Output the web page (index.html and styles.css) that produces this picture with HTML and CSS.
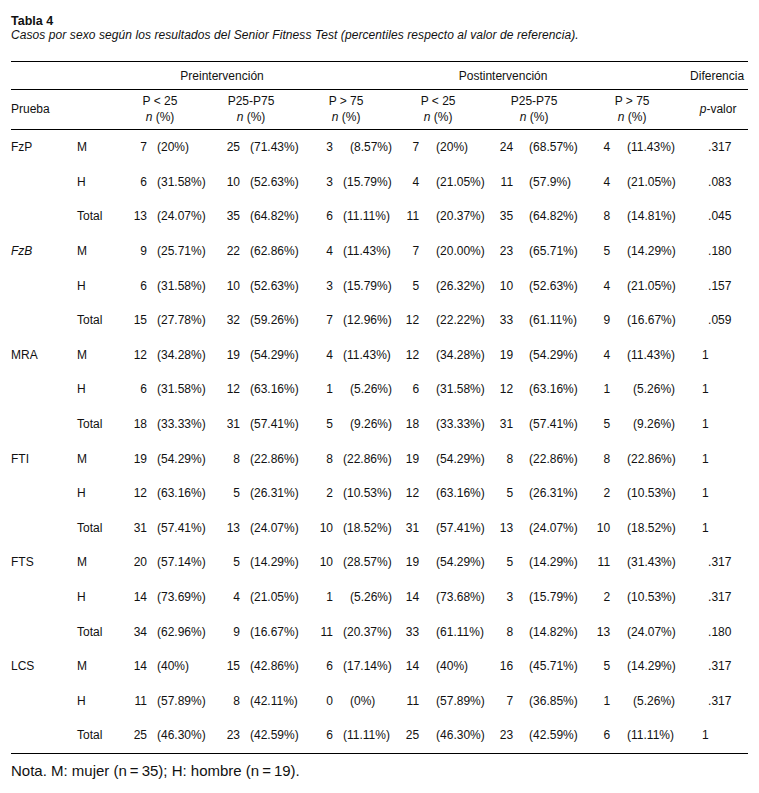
FILE: index.html
```html
<!DOCTYPE html>
<html lang="es">
<head>
<meta charset="utf-8">
<title>Tabla 4</title>
<link rel="stylesheet" href="styles.css">
</head>
<body>
<div class="page">
  <div class="caption">
    <div class="title">Tabla 4</div>
    <div class="subtitle">Casos por sexo según los resultados del Senior Fitness Test (percentiles respecto al valor de referencia).</div>
  </div>
  <table class="data">
    <colgroup>
      <col class="w-test"><col class="w-sex">
      <col class="w-n1"><col class="w-p1">
      <col class="w-n2"><col class="w-p2">
      <col class="w-n3"><col class="w-p3">
      <col class="w-n4"><col class="w-p4">
      <col class="w-n5"><col class="w-p5">
      <col class="w-n6"><col class="w-p6">
      <col class="w-pv">
    </colgroup>
    <thead>
      <tr class="h1">
        <th colspan="2"></th>
        <th colspan="6" class="g-pre">Preintervención</th>
        <th colspan="6" class="g-post">Postintervención</th>
        <th class="g-dif">Diferencia</th>
      </tr>
      <tr class="h2">
        <th colspan="2" class="h-test">Prueba</th>
        <th colspan="2" class="s1">P &lt; 25<br><i>n</i> (%)</th>
        <th colspan="2" class="s2">P25-P75<br><i>n</i> (%)</th>
        <th colspan="2" class="s3">P &gt; 75<br><i>n</i> (%)</th>
        <th colspan="2" class="s4">P &lt; 25<br><i>n</i> (%)</th>
        <th colspan="2" class="s5">P25-P75<br><i>n</i> (%)</th>
        <th colspan="2" class="s6">P &gt; 75<br><i>n</i> (%)</th>
        <th class="s7"><i>p</i>-valor</th>
      </tr>
    </thead>
    <tbody>
      <tr><td class="t">FzP</td><td>M</td><td class="n">7</td><td class="p a">(20%)</td><td class="n">25</td><td class="p a">(71.43%)</td><td class="n">3</td><td class="p b d1">(8.57%)</td><td class="n">7</td><td class="p c">(20%)</td><td class="n">24</td><td class="p e">(68.57%)</td><td class="n">4</td><td class="p f">(11.43%)</td><td class="pv dec">.317</td></tr>
      <tr><td></td><td>H</td><td class="n">6</td><td class="p a">(31.58%)</td><td class="n">10</td><td class="p a">(52.63%)</td><td class="n">3</td><td class="p b">(15.79%)</td><td class="n">4</td><td class="p c">(21.05%)</td><td class="n">11</td><td class="p e">(57.9%)</td><td class="n">4</td><td class="p f">(21.05%)</td><td class="pv dec">.083</td></tr>
      <tr><td></td><td>Total</td><td class="n">13</td><td class="p a">(24.07%)</td><td class="n">35</td><td class="p a">(64.82%)</td><td class="n">6</td><td class="p b">(11.11%)</td><td class="n">11</td><td class="p c">(20.37%)</td><td class="n">35</td><td class="p e">(64.82%)</td><td class="n">8</td><td class="p f">(14.81%)</td><td class="pv dec">.045</td></tr>

      <tr><td class="t"><i>FzB</i></td><td>M</td><td class="n">9</td><td class="p a">(25.71%)</td><td class="n">22</td><td class="p a">(62.86%)</td><td class="n">4</td><td class="p b">(11.43%)</td><td class="n">7</td><td class="p c">(20.00%)</td><td class="n">23</td><td class="p e">(65.71%)</td><td class="n">5</td><td class="p f">(14.29%)</td><td class="pv dec">.180</td></tr>
      <tr><td></td><td>H</td><td class="n">6</td><td class="p a">(31.58%)</td><td class="n">10</td><td class="p a">(52.63%)</td><td class="n">3</td><td class="p b">(15.79%)</td><td class="n">5</td><td class="p c">(26.32%)</td><td class="n">10</td><td class="p e">(52.63%)</td><td class="n">4</td><td class="p f">(21.05%)</td><td class="pv dec">.157</td></tr>
      <tr><td></td><td>Total</td><td class="n">15</td><td class="p a">(27.78%)</td><td class="n">32</td><td class="p a">(59.26%)</td><td class="n">7</td><td class="p b">(12.96%)</td><td class="n">12</td><td class="p c">(22.22%)</td><td class="n">33</td><td class="p e">(61.11%)</td><td class="n">9</td><td class="p f">(16.67%)</td><td class="pv dec">.059</td></tr>

      <tr><td class="t">MRA</td><td>M</td><td class="n">12</td><td class="p a">(34.28%)</td><td class="n">19</td><td class="p a">(54.29%)</td><td class="n">4</td><td class="p b">(11.43%)</td><td class="n">12</td><td class="p c">(34.28%)</td><td class="n">19</td><td class="p e">(54.29%)</td><td class="n">4</td><td class="p f">(11.43%)</td><td class="pv one">1</td></tr>
      <tr><td></td><td>H</td><td class="n">6</td><td class="p a">(31.58%)</td><td class="n">12</td><td class="p a">(63.16%)</td><td class="n">1</td><td class="p b d1">(5.26%)</td><td class="n">6</td><td class="p c">(31.58%)</td><td class="n">12</td><td class="p e">(63.16%)</td><td class="n">1</td><td class="p f d1">(5.26%)</td><td class="pv one">1</td></tr>
      <tr><td></td><td>Total</td><td class="n">18</td><td class="p a">(33.33%)</td><td class="n">31</td><td class="p a">(57.41%)</td><td class="n">5</td><td class="p b d1">(9.26%)</td><td class="n">18</td><td class="p c">(33.33%)</td><td class="n">31</td><td class="p e">(57.41%)</td><td class="n">5</td><td class="p f d1">(9.26%)</td><td class="pv one">1</td></tr>

      <tr><td class="t">FTI</td><td>M</td><td class="n">19</td><td class="p a">(54.29%)</td><td class="n">8</td><td class="p a">(22.86%)</td><td class="n">8</td><td class="p b">(22.86%)</td><td class="n">19</td><td class="p c">(54.29%)</td><td class="n">8</td><td class="p e">(22.86%)</td><td class="n">8</td><td class="p f">(22.86%)</td><td class="pv one">1</td></tr>
      <tr><td></td><td>H</td><td class="n">12</td><td class="p a">(63.16%)</td><td class="n">5</td><td class="p a">(26.31%)</td><td class="n">2</td><td class="p b">(10.53%)</td><td class="n">12</td><td class="p c">(63.16%)</td><td class="n">5</td><td class="p e">(26.31%)</td><td class="n">2</td><td class="p f">(10.53%)</td><td class="pv one">1</td></tr>
      <tr><td></td><td>Total</td><td class="n">31</td><td class="p a">(57.41%)</td><td class="n">13</td><td class="p a">(24.07%)</td><td class="n">10</td><td class="p b">(18.52%)</td><td class="n">31</td><td class="p c">(57.41%)</td><td class="n">13</td><td class="p e">(24.07%)</td><td class="n">10</td><td class="p f">(18.52%)</td><td class="pv one">1</td></tr>

      <tr><td class="t">FTS</td><td>M</td><td class="n">20</td><td class="p a">(57.14%)</td><td class="n">5</td><td class="p a">(14.29%)</td><td class="n">10</td><td class="p b">(28.57%)</td><td class="n">19</td><td class="p c">(54.29%)</td><td class="n">5</td><td class="p e">(14.29%)</td><td class="n">11</td><td class="p f">(31.43%)</td><td class="pv dec">.317</td></tr>
      <tr><td></td><td>H</td><td class="n">14</td><td class="p a">(73.69%)</td><td class="n">4</td><td class="p a">(21.05%)</td><td class="n">1</td><td class="p b d1">(5.26%)</td><td class="n">14</td><td class="p c">(73.68%)</td><td class="n">3</td><td class="p e">(15.79%)</td><td class="n">2</td><td class="p f">(10.53%)</td><td class="pv dec">.317</td></tr>
      <tr><td></td><td>Total</td><td class="n">34</td><td class="p a">(62.96%)</td><td class="n">9</td><td class="p a">(16.67%)</td><td class="n">11</td><td class="p b">(20.37%)</td><td class="n">33</td><td class="p c">(61.11%)</td><td class="n">8</td><td class="p e">(14.82%)</td><td class="n">13</td><td class="p f">(24.07%)</td><td class="pv dec">.180</td></tr>

      <tr><td class="t">LCS</td><td>M</td><td class="n">14</td><td class="p a">(40%)</td><td class="n">15</td><td class="p a">(42.86%)</td><td class="n">6</td><td class="p b">(17.14%)</td><td class="n">14</td><td class="p c">(40%)</td><td class="n">16</td><td class="p e">(45.71%)</td><td class="n">5</td><td class="p f">(14.29%)</td><td class="pv dec">.317</td></tr>
      <tr><td></td><td>H</td><td class="n">11</td><td class="p a">(57.89%)</td><td class="n">8</td><td class="p a">(42.11%)</td><td class="n">0</td><td class="p b d1">(0%)</td><td class="n">11</td><td class="p c">(57.89%)</td><td class="n">7</td><td class="p e">(36.85%)</td><td class="n">1</td><td class="p f d1">(5.26%)</td><td class="pv dec">.317</td></tr>
      <tr class="last"><td></td><td>Total</td><td class="n">25</td><td class="p a">(46.30%)</td><td class="n">23</td><td class="p a">(42.59%)</td><td class="n">6</td><td class="p b">(11.11%)</td><td class="n">25</td><td class="p c">(46.30%)</td><td class="n">23</td><td class="p e">(42.59%)</td><td class="n">6</td><td class="p f">(11.11%)</td><td class="pv one">1</td></tr>
    </tbody>
  </table>
  <p class="note">Nota. M: mujer (n&#8201;=&#8201;35); H: hombre (n&#8201;=&#8201;19).</p>
</div>
</body>
</html>
```

FILE: styles.css
```css
html, body {
  margin: 0;
  padding: 0;
  background: #ffffff;
}

body {
  font-family: "Liberation Sans", Arial, Helvetica, sans-serif;
  color: #111111;
}

.page {
  padding: 14px 11px 0 11px;
  width: 737px;
}

.caption {
  font-size: 12px;
  line-height: 14px;
}

.title {
  font-weight: bold;
  font-size: 12.5px;
}

.subtitle {
  font-style: italic;
  letter-spacing: 0.08px;
}

.data {
  margin-top: 19px;
  width: 737px;
  table-layout: fixed;
  border-collapse: collapse;
  font-size: 12px;
  line-height: 14px;
}

.w-test { width: 66px; }
.w-sex  { width: 40px; }
.w-n1   { width: 30px; }
.w-p1   { width: 68px; }
.w-n2   { width: 25px; }
.w-p2   { width: 65px; }
.w-n3   { width: 28px; }
.w-p3   { width: 59px; }
.w-n4   { width: 27px; }
.w-p4   { width: 71px; }
.w-n5   { width: 23px; }
.w-p5   { width: 72px; }
.w-n6   { width: 25px; }
.w-p6   { width: 65px; }
.w-pv   { width: 73px; }

.data th {
  font-weight: normal;
  padding: 0;
  white-space: nowrap;
}

.data td {
  padding: 10.3px 0;
  white-space: nowrap;
  vertical-align: middle;
}

.h1 {
  border-top: 1px solid #000;
  border-bottom: 1px solid #000;
}

.h1 th {
  height: 27px;
  padding: 0;
  vertical-align: middle;
}

.h2 {
  border-bottom: 1px solid #000;
}

.h2 th {
  line-height: 16px;
  padding: 3px 0 4px 0;
  vertical-align: middle;
}

.g-pre  { text-align: center; padding-right: 65px !important; }
.g-post { text-align: center; padding-right: 61px !important; }
.g-dif  { text-align: right; padding-right: 4px !important; }

.h-test { text-align: left; }
.s1 { text-align: center; padding-right: 12px !important; }
.s2 { text-align: center; padding-right: 18px !important; }
.s3 { text-align: center; padding-right: 5px !important; }
.s4 { text-align: center; padding-right: 6px !important; }
.s5 { text-align: center; padding-right: 7px !important; }
.s6 { text-align: center; padding-left: 4px !important; }
.s7 { text-align: center; padding-left: 13px !important; }

.data td.n {
  text-align: right;
}

.data td.p {
  text-align: left;
}

.data td.a { padding-left: 10px; }
.data td.b { padding-left: 10px; }
.data td.c { padding-left: 17px; }
.data td.e { padding-left: 16px; }
.data td.f { padding-left: 17px; }

.data td.b.d1 { padding-left: 17px; }
.data td.f.d1 { padding-left: 23px; }

.data td.pv { text-align: left; }
.data td.dec { padding-left: 33px; }
.data td.one { padding-left: 27px; }

.data tr.last {
  border-bottom: 1px solid #000;
}

.note {
  margin: 8px 0 0 0;
  font-size: 15px;
  line-height: 18px;
}
```
